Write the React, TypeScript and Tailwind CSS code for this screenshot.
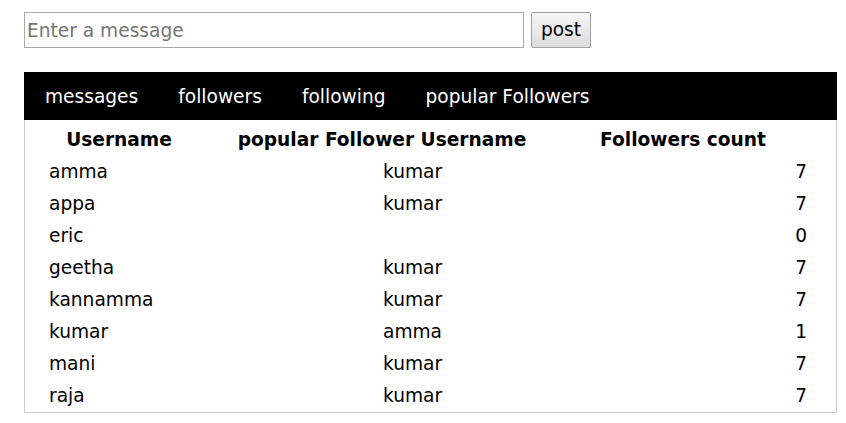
const rows = [
  { user: 'amma', popular: 'kumar', count: 7 },
  { user: 'appa', popular: 'kumar', count: 7 },
  { user: 'eric', popular: '', count: 0 },
  { user: 'geetha', popular: 'kumar', count: 7 },
  { user: 'kannamma', popular: 'kumar', count: 7 },
  { user: 'kumar', popular: 'amma', count: 1 },
  { user: 'mani', popular: 'kumar', count: 7 },
  { user: 'raja', popular: 'kumar', count: 7 },
]

const tabs = ['messages', 'followers', 'following', 'popular Followers']

const App = () => {
  return (
    <div className="min-h-screen bg-white text-[18.6px] text-black" style={{ fontFamily: '"DejaVu Sans", Verdana, sans-serif' }}>
      <div className="px-6 pt-3">
        <div className="flex items-center gap-[7px]">
          <input
            type="text"
            placeholder="Enter a message"
            className="h-9 w-[500px] border border-[#a9a9a9] px-[2px] text-[18.6px] placeholder:text-[#757575] outline-none"
          />
          <button className="h-9 w-[60px] rounded-[2px] border border-[#a0a0a0] bg-gradient-to-b from-[#f6f6f6] to-[#dddddd] text-[18.6px] leading-none">
            post
          </button>
        </div>

        <div className="mt-6 w-[813px]">
          <div className="flex h-12 items-center bg-black pl-px text-white">
            {tabs.map((t) => (
              <span key={t} className="px-5 pt-[2px]">
                {t}
              </span>
            ))}
          </div>

          <div className="border border-t-0 border-[#cccccc] pt-[3px] pb-px">
            <div className="grid grid-cols-[188px_338px_264px] font-bold">
              <div className="flex h-8 items-center justify-center pt-[2px]">Username</div>
              <div className="flex h-8 items-center justify-center pt-[2px]">popular Follower Username</div>
              <div className="flex h-8 items-center justify-center pt-[2px]">Followers count</div>
            </div>
            {rows.map((r) => (
              <div key={r.user} className="grid h-8 grid-cols-[188px_338px_264px] items-center pt-[2px]">
                <div className="pl-6">{r.user}</div>
                <div className="pl-[170px]">{r.popular}</div>
                <div className="pr-2 text-right">{r.count}</div>
              </div>
            ))}
          </div>
        </div>
      </div>
    </div>
  )
}

export default App
